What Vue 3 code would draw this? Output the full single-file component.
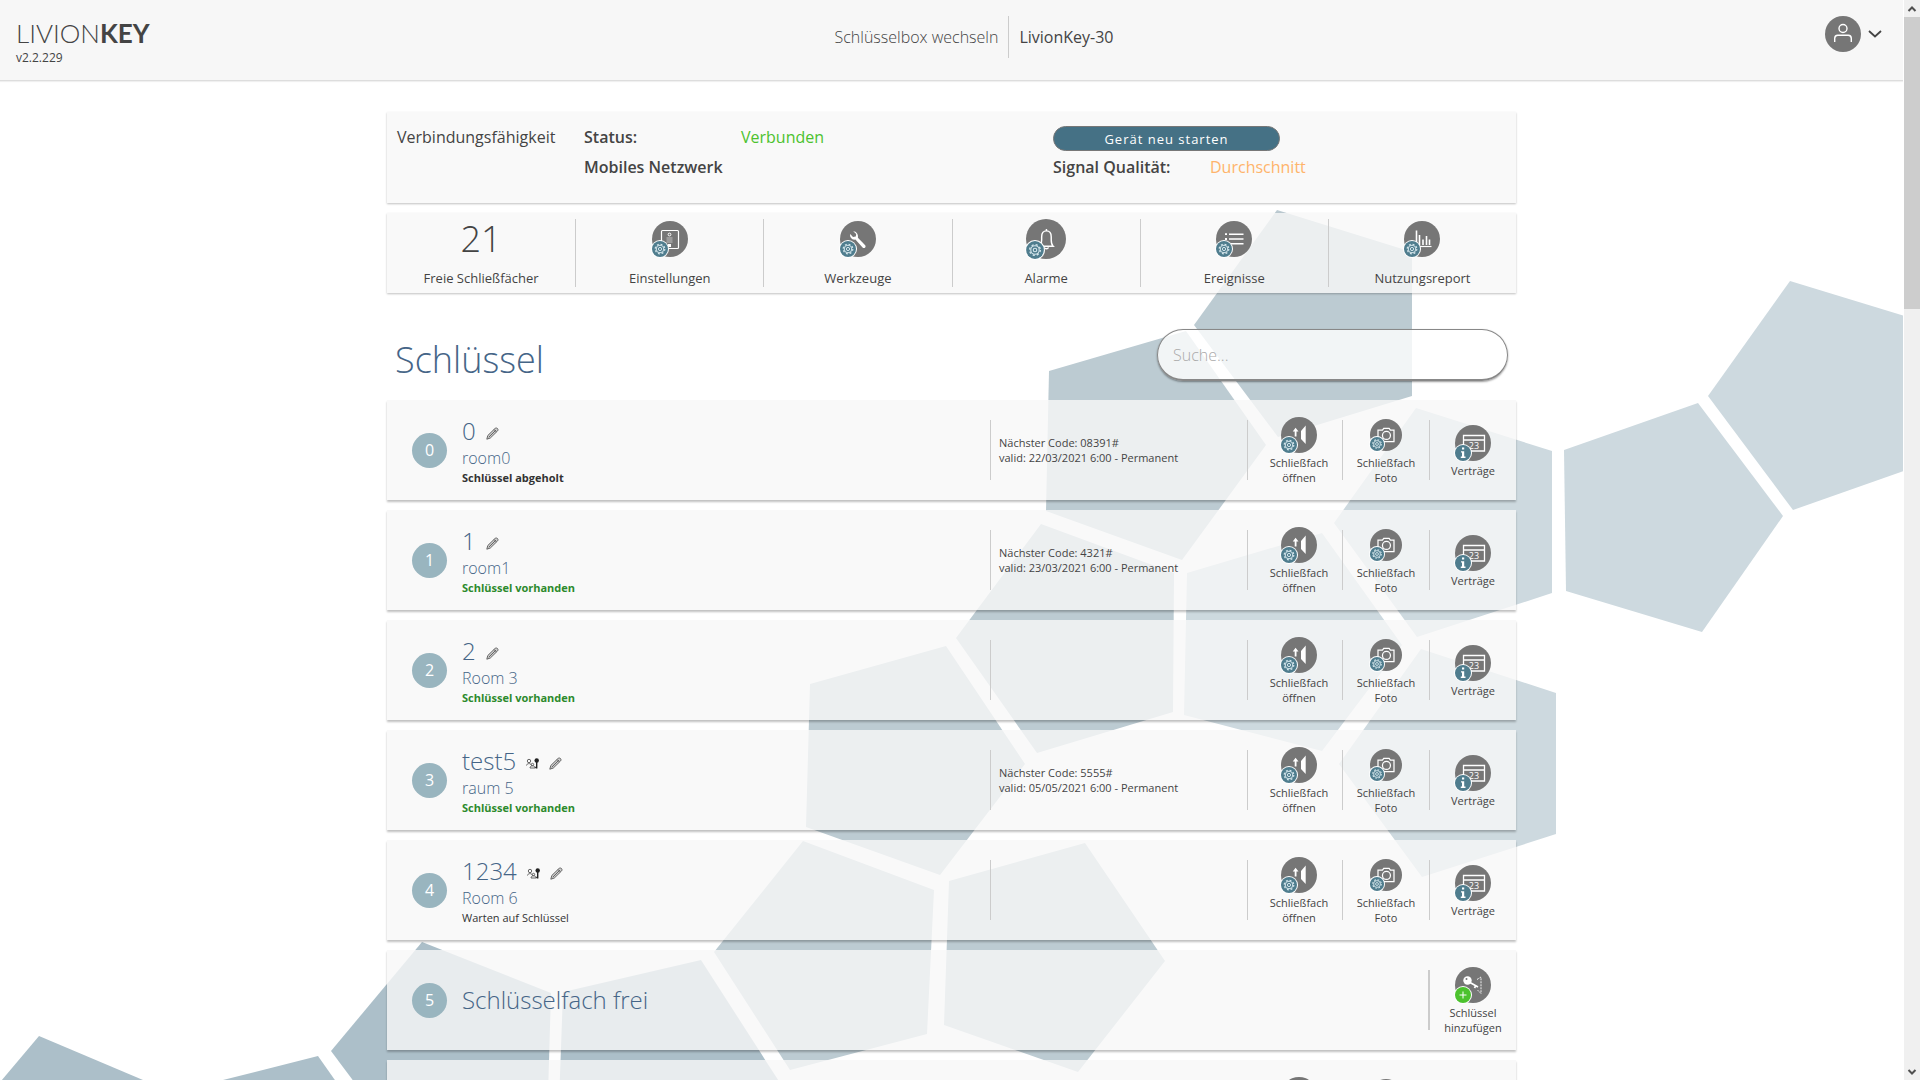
<script setup>
import { ref, computed } from 'vue'

const search = ref('')

const tiles = [
  { label: 'Einstellungen', icon: 'i-box', size: 36 },
  { label: 'Werkzeuge', icon: 'i-wrench', size: 36 },
  { label: 'Alarme', icon: 'i-bell', size: 40 },
  { label: 'Ereignisse', icon: 'i-list', size: 36 },
  { label: 'Nutzungsreport', icon: 'i-chart', size: 36 }
]

const keys = [
  { slot: 0, name: '0', room: 'room0', status: 'Schlüssel abgeholt', kind: 'away', code: '08391#', valid: '22/03/2021 6:00 - Permanent' },
  { slot: 1, name: '1', room: 'room1', status: 'Schlüssel vorhanden', kind: 'present', code: '4321#', valid: '23/03/2021 6:00 - Permanent' },
  { slot: 2, name: '2', room: 'Room 3', status: 'Schlüssel vorhanden', kind: 'present' },
  { slot: 3, name: 'test5', room: 'raum 5', status: 'Schlüssel vorhanden', kind: 'present', shared: true, code: '5555#', valid: '05/05/2021 6:00 - Permanent' },
  { slot: 4, name: '1234', room: 'Room 6', status: 'Warten auf Schlüssel', kind: 'waiting', shared: true },
  { slot: 5, free: true },
  { slot: 6, name: '6', room: 'Room 7', status: 'Schlüssel vorhanden', kind: 'present' }
]

const visibleKeys = computed(() => {
  const q = search.value.trim().toLowerCase()
  return q ? keys.filter(k => `${k.name ?? ''} ${k.room ?? ''}`.toLowerCase().includes(q)) : keys
})
</script>

<template>
  <div class="app">
    <svg class="defs" aria-hidden="true">
      <symbol id="i-gear" viewBox="0 0 18 18">
        <circle cx="9" cy="9" r="9" fill="#fff" />
        <circle cx="9" cy="9" r="8" fill="#4f7d8e" />
        <g fill="none" stroke="#d5e6ec">
          <circle cx="9" cy="9" r="1.6" stroke-width="1" />
          <circle cx="9" cy="9" r="3.8" stroke-width="1" />
          <circle cx="9" cy="9" r="4.8" stroke-width="1.2" stroke-dasharray="1.9 1.87" />
        </g>
      </symbol>
      <symbol id="i-info" viewBox="0 0 18 18">
        <circle cx="9" cy="9" r="9" fill="#fff" />
        <circle cx="9" cy="9" r="8" fill="#4f7d8e" />
        <path d="M8 3.6h2.2v2H8zM7 7.2h3.2v5.4h1.3v1.3H6.8v-1.3H8V8.500H7z" fill="#fff" />
      </symbol>
      <symbol id="i-plus" viewBox="0 0 18 18">
        <circle cx="9" cy="9" r="9" fill="#fff" />
        <circle cx="9" cy="9" r="8" fill="#4cc22e" />
        <path d="M9 5.500v7M5.500 9h7" stroke="#fff" stroke-width="1" />
      </symbol>
      <symbol id="i-box" viewBox="0 0 36 36">
        <g fill="none" stroke="#fff">
          <rect x="9.500" y="9.500" width="17" height="18" rx="1" stroke-width="1.2" />
          <circle cx="17.500" cy="13.500" r="1.400" stroke-width="1" />
          <path d="M14.500 17h6M14.500 19h6M14.500 21h6" stroke-width=".8" opacity=".7" />
        </g>
        <rect x="16" y="23" width="3" height="3" fill="#fff" />
      </symbol>
      <symbol id="i-wrench" viewBox="0 0 36 36">
        <path d="M13.200 10.200l3 2.800-.4 2.600-2.800.3-2.800-2.900c-.8 3 1.600 6.200 5.200 5.600l7.200 8c1.500 1.500 4-.7 2.600-2.400l-7.300-7.500c.7-3.400-1.700-6.600-4.700-6.500z" fill="#fff" />
      </symbol>
      <symbol id="i-bell" viewBox="0 0 36 36">
        <g fill="none" stroke="#fff" stroke-width="1.300">
          <path d="M12.500 24.500c1.300-1.300 1.600-2.800 1.600-5.500v-3c0-3.200 1.600-5.300 4.300-5.300s4.300 2.100 4.300 5.300v3c0 2.700.3 4.200 1.700 5.500z" />
          <path d="M18.400 9v1.700M16.500 25.500c.5 1.800 3.200 1.800 3.700 0" />
        </g>
      </symbol>
      <symbol id="i-list" viewBox="0 0 36 36">
        <path d="M13 13.200h14.500M13 18h14.500M13 22.800h14.500" stroke="#fff" stroke-width="1.400" />
        <path d="M9 13.200h2M9 18h2" stroke="#fff" stroke-width="1.800" />
      </symbol>
      <symbol id="i-chart" viewBox="0 0 36 36">
        <path d="M10.500 25.500h17" stroke="#fff" stroke-width="1.200" />
        <path d="M12.500 9.500V24M15.500 14V24M19 18.500V24M22.500 15V24M25.500 18.500V24" stroke="#fff" stroke-width="1.600" />
      </symbol>
      <symbol id="i-open" viewBox="0 0 36 36">
        <path d="M13.700 19.500v-5h-2l2.900-3.700 2.900 3.700h-2v5z" fill="#fff" />
        <path d="M20 14l4.700-5.500v18.500l-4.700-5z" fill="#fff" />
      </symbol>
      <symbol id="i-camera" viewBox="0 0 36 36">
        <g fill="none" stroke="#fff" stroke-width="1.400">
          <path d="M9 12.500h5l1.500-2h6l1.500 2h4v13H9z" />
          <circle cx="18.500" cy="18.500" r="4.500" />
        </g>
      </symbol>
      <symbol id="i-calendar" viewBox="0 0 36 36">
        <path d="M8.500 10.500h21v15.500h-21zM8.500 15h21" fill="none" stroke="#fff" stroke-width="1.300" />
        <text x="19" y="24" text-anchor="middle" font-size="9" font-family="Open Sans, sans-serif" fill="#fff">23</text>
      </symbol>
      <symbol id="i-key" viewBox="0 0 36 36">
        <circle cx="12.500" cy="13.500" r="4.200" fill="#fff" />
        <circle cx="11.500" cy="12" r="1" fill="#767676" />
        <path d="M15 15.500l8 4.500M20.500 19l-1 2" stroke="#fff" stroke-width="1.700" />
        <path d="M22 12.500l4-2.500v16.500l-4-4" fill="none" stroke="#fff" stroke-width=".9" stroke-dasharray="2 1" />
      </symbol>
    </svg>

    <div class="page">
      <svg class="backdrop" viewBox="0 0 1903 1080" preserveAspectRatio="xMidYMin slice" aria-hidden="true">
        <g fill="#bccbd2">
          <path d="M1277 210L1412 252V396L1278 437L1194 325Z" />
          <path d="M1049 371L1186 331L1266 445L1182 560L1046 511Z" />
          <path d="M1041 524L1174 573L1173 712L1037 753L956 638Z" />
          <path d="M810 684L946 646L1025 764L940 875L806 827Z" />
          <path d="M803 841L934 890L927 1034L790 1070L714 952Z" />
          <path d="M949 881L1085 843L1165 961L1078 1072L944 1025Z" />
        </g>
        <g fill="#cdd9df">
          <path d="M1187 573L1322 533L1402 645L1322 751L1184 715Z" />
          <path d="M1416 408L1552 451V593L1417 637L1334 523Z" />
          <path d="M1421 649L1556 693V834L1422 877L1339 764Z" />
          <path d="M1564 450L1698 403L1783 516L1702 632L1566 591Z" />
          <path d="M1790 281L1924 322V464L1793 510L1708 396Z" />
        </g>
        <g fill="#acbfc9">
          <path d="M422 942L551 993L547 1130H390L331 1051Z" />
          <path d="M563 992L701 960L782 1086L740 1130H558Z" />
          <path d="M39 1036L143 1080L190 1130H-20V1106Z" />
          <path d="M223 1080L318 1056L370 1130H160Z" />
        </g>
      </svg>

      <header class="topbar">
        <div class="brand">
          <a class="logo" href="#">LIVION<b>KEY</b></a>
          <span class="version">v2.2.229</span>
        </div>
        <div class="switcher">
          <a class="switch" href="#">Schlüsselbox wechseln</a>
          <span class="current">LivionKey-30</span>
        </div>
        <button class="user" type="button" aria-label="Benutzerkonto">
          <svg class="avatar" viewBox="0 0 36 36">
            <circle cx="18" cy="18" r="18" fill="#767676" />
            <g fill="none" stroke="#fff" stroke-width="1.400">
              <circle cx="18" cy="12.500" r="4" />
              <path d="M9.700 26v-3.500c0-2 1-3.200 3-3.200h10.600c2 0 3 1.200 3 3.200V26" />
            </g>
          </svg>
          <svg class="chevron" viewBox="0 0 14 8"><path d="M1 1l6 5.500L13 1" fill="none" stroke="#444" stroke-width="1.800" /></svg>
        </button>
      </header>

      <main class="content">
        <section class="panel connectivity">
          <h2 class="heading">Verbindungsfähigkeit</h2>
          <strong>Status:</strong>
          <span class="good">Verbunden</span>
          <button class="restart" type="button">Gerät neu starten</button>
          <strong class="network">Mobiles Netzwerk</strong>
          <strong class="signal">Signal Qualität:</strong>
          <span class="medium">Durchschnitt</span>
        </section>

        <nav class="panel tiles">
          <a class="tile" href="#">
            <span class="tile-icon count">21</span>
            <span>Freie Schließfächer</span>
          </a>
          <a v-for="t in tiles" :key="t.label" class="tile" href="#">
            <span class="tile-icon">
              <span class="disc" :class="{ large: t.size > 36 }">
                <svg class="glyph"><use :href="'#' + t.icon" /></svg>
                <svg class="badge"><use href="#i-gear" /></svg>
              </span>
            </span>
            <span>{{ t.label }}</span>
          </a>
        </nav>

        <div class="list-head">
          <h1>Schlüssel</h1>
          <input v-model="search" class="search" type="search" placeholder="Suche..." aria-label="Suche">
        </div>

        <ul class="keys">
          <li v-for="k in visibleKeys" :key="k.slot" class="key">
            <span class="slot">{{ k.slot }}</span>
            <template v-if="k.free">
              <div class="info"><span class="name">Schlüsselfach frei</span></div>
              <div class="cell last add">
                <button class="action" type="button">
                  <span class="disc">
                    <svg class="glyph"><use href="#i-key" /></svg>
                    <svg class="badge"><use href="#i-plus" /></svg>
                  </span>
                  <span>Schlüssel<br>hinzufügen</span>
                </button>
              </div>
            </template>
            <template v-else>
              <div class="info">
                <div class="title">
                  <span class="name">{{ k.name }}</span>
                  <svg v-if="k.shared" class="mini" viewBox="0 0 13 13">
                    <g fill="none" stroke="#555" stroke-width=".9">
                      <circle cx="3" cy="4" r="1.700" />
                      <path d="M.5 8.500c0-2 4-3 5 0M4 11c0-3 5-3 5 0z" />
                      <circle cx="6.500" cy="7.500" r="1.200" />
                    </g>
                    <path d="M10.700 5v6.500M10.700 10.500h-1.500" stroke="#222" stroke-width="1.400" />
                    <circle cx="10.700" cy="3.500" r="2.200" fill="#222" />
                  </svg>
                  <button class="edit" type="button" aria-label="Bearbeiten">
                    <svg class="mini" viewBox="0 0 13 13">
                      <path d="M.8 12.200l1-3.700 7.200-7c1.800-1.500 4 .7 2.500 2.500l-7.200 7z" fill="#ccc" stroke="#666" stroke-width="1" />
                      <path d="M2.800 10.200l7.200-7.200M8 2.500l2.500 2.500" fill="none" stroke="#666" stroke-width="1" />
                    </svg>
                  </button>
                </div>
                <span class="room">{{ k.room }}</span>
                <span class="status" :class="k.kind">{{ k.status }}</span>
              </div>
              <div class="cell code">
                <template v-if="k.code">
                  <span>Nächster Code: {{ k.code }}</span>
                  <span>valid: {{ k.valid }}</span>
                </template>
              </div>
              <div class="cell open">
                <button class="action" type="button">
                  <span class="disc">
                    <svg class="glyph"><use href="#i-open" /></svg>
                    <svg class="badge"><use href="#i-gear" /></svg>
                  </span>
                  <span>Schließfach<br>öffnen</span>
                </button>
              </div>
              <div class="cell photo">
                <button class="action" type="button">
                  <span class="disc small">
                    <svg class="glyph"><use href="#i-camera" /></svg>
                    <svg class="badge"><use href="#i-gear" /></svg>
                  </span>
                  <span>Schließfach<br>Foto</span>
                </button>
              </div>
              <div class="cell last">
                <button class="action" type="button">
                  <span class="disc">
                    <svg class="glyph"><use href="#i-calendar" /></svg>
                    <svg class="badge"><use href="#i-info" /></svg>
                  </span>
                  <span>Verträge</span>
                </button>
              </div>
            </template>
          </li>
        </ul>
      </main>
    </div>

    <div class="scrollbar" aria-hidden="true">
      <svg class="arrow" viewBox="0 0 16 17"><path d="M4.500 11L8 7.500L11.500 11" fill="none" stroke="#505050" stroke-width="2" /></svg>
      <div class="thumb"></div>
      <svg class="arrow" viewBox="0 0 16 17"><path d="M4.500 7L8 10.500L11.500 7" fill="none" stroke="#505050" stroke-width="2" /></svg>
    </div>
  </div>
</template>

<style>
body {
  background: #fff;
}
</style>

<style scoped>
* {
  box-sizing: border-box;
}

.app {
  display: flex;
  height: 100vh;
  overflow: hidden;
  font-family: "Open Sans", "Noto Sans", sans-serif;
  font-size: 16px;
  font-weight: 400;
  color: #444;
}

a {
  color: inherit;
  text-decoration: none;
}

button {
  padding: 0;
  border: 0;
  background: none;
  font: inherit;
  color: inherit;
  cursor: pointer;
}

svg {
  display: block;
}

.defs {
  display: none;
}

.page {
  position: relative;
  flex: 1;
  min-width: 0;
  overflow: hidden;
}

.backdrop {
  position: absolute;
  inset: 0;
  width: 100%;
  height: 100%;
}

.topbar {
  position: relative;
  display: grid;
  grid-template-columns: 1fr auto 1fr;
  height: 81px;
  padding: 0 21px 0 16px;
  background: #f7f7f7;
  border-bottom: 1px solid #ddd;
  box-shadow: 0 1px 1px rgba(0, 0, 0, .06);
}

.brand {
  display: flex;
  flex-direction: column;
  align-items: flex-start;
  padding-top: 18px;
}

.logo {
  font-family: Lato, sans-serif;
  font-size: 26px;
  font-weight: 300;
  line-height: 31px;
}

.logo b {
  font-weight: 700;
}

.version {
  font-size: 12px;
  line-height: 17px;
}

.switcher {
  display: flex;
  align-items: flex-start;
  padding: 16px 0 0 50px;
  line-height: 42px;
}

.switch {
  padding-right: 10px;
  border-right: 1px solid #ccc;
  font-weight: 300;
}

.current {
  padding-left: 10px;
}

.user {
  display: flex;
  justify-self: end;
  align-self: start;
  align-items: center;
  gap: 7px;
  margin-top: 16px;
}

.avatar {
  width: 36px;
  height: 36px;
}

.chevron {
  width: 14px;
  height: 8px;
}

.content {
  position: relative;
  max-width: 1129px;
  margin: 0 auto;
  padding-top: 31px;
}

.panel {
  margin-bottom: 10px;
  background: rgba(248, 248, 248, .8);
  box-shadow: 0 1px 2px rgba(0, 0, 0, .25);
}

.connectivity {
  display: grid;
  grid-template-columns: 187px 157px 312px 157px 1fr;
  grid-auto-rows: 30px;
  height: 91px;
  padding: 10px 9px 0 10px;
  line-height: 30px;
}

.heading {
  grid-row: span 2;
  margin: 0;
  font-size: 16px;
  font-weight: 400;
}

strong {
  font-weight: 600;
}

.good {
  color: #4cc22e;
}

.medium {
  color: #ffb46b;
}

.restart {
  grid-column: span 2;
  width: 227px;
  height: 25px;
  margin-top: 4px;
  border: 1px solid #777;
  border-radius: 13px;
  background: #457185;
  color: #fff;
  font-size: 13px;
  line-height: 22px;
  letter-spacing: 1px;
}

.network {
  grid-column: 2 / span 2;
}

.tiles {
  display: grid;
  grid-template-columns: repeat(6, 1fr);
  height: 80px;
  padding: 6px 0;
}

.tile {
  display: flex;
  flex-direction: column;
  align-items: center;
  font-size: 13px;
  line-height: 18px;
}

.tile + .tile {
  border-left: 1px solid #ccc;
}

.tile-icon {
  display: flex;
  align-items: center;
  height: 40px;
  margin-bottom: 10px;
}

.count {
  font-size: 36px;
  font-weight: 300;
}

.disc {
  position: relative;
  width: 36px;
  height: 36px;
  border-radius: 50%;
  background: #767676;
}

.disc.large {
  width: 40px;
  height: 40px;
}

.disc.small {
  width: 32px;
  height: 32px;
}

.glyph {
  width: 100%;
  height: 100%;
}

.badge {
  position: absolute;
  left: -1px;
  bottom: -1px;
  width: 50%;
  height: 50%;
}

.list-head {
  display: flex;
  justify-content: space-between;
  padding: 26px 8px 0;
  height: 97px;
}

h1 {
  margin: 6px 0 0;
  font-size: 36px;
  font-weight: 300;
  line-height: 50px;
  color: #456587;
}

.search {
  width: 351px;
  height: 52px;
  padding: 0 15px;
  border: 1px solid #888;
  border-bottom-width: 2px;
  border-radius: 26px;
  background: rgba(255, 255, 255, .8);
  box-shadow: 0 1px 2px rgba(0, 0, 0, .4);
  font: 300 16px "Open Sans", sans-serif;
  color: #444;
  appearance: none;
}

.search::placeholder {
  color: #aaa;
  opacity: 1;
}

.keys {
  display: flex;
  flex-direction: column;
  gap: 10px;
  margin: 0;
  padding: 0;
  list-style: none;
}

.key {
  display: flex;
  align-items: center;
  height: 100px;
  padding-left: 25px;
  background: rgba(248, 248, 248, .8);
  box-shadow: 0 2px 2px rgba(0, 0, 0, .25);
}

.slot {
  width: 35px;
  height: 35px;
  margin-right: 15px;
  border-radius: 50%;
  background: #99b5bf;
  color: #fff;
  line-height: 34px;
  text-align: center;
}

.info {
  display: flex;
  flex: 1;
  flex-direction: column;
  color: #456587;
}

.title {
  display: flex;
  align-items: center;
  gap: 10px;
}

.name {
  font-size: 24px;
  font-weight: 300;
  line-height: 32px;
}

.mini {
  width: 13px;
  height: 13px;
}

.edit,
.title > .mini {
  margin-top: 6px;
}

.room {
  font-weight: 300;
  line-height: 22px;
}

.status {
  font-size: 11px;
  font-weight: 700;
  line-height: 17px;
  color: #333;
}

.status.present {
  color: #2c8a2c;
}

.status.waiting {
  font-weight: 400;
}

.cell {
  display: flex;
  align-items: center;
  justify-content: center;
  height: 60px;
  border-left: 1px solid #ccc;
  font-size: 11px;
  line-height: 15px;
}

.code {
  width: 257px;
  flex-direction: column;
  align-items: flex-start;
  padding-left: 8px;
}

.open {
  width: 95px;
  padding-left: 8px;
}

.photo {
  width: 87px;
}

.last {
  width: 87px;
}

.add {
  width: 88px;
  border-left-width: 2px;
}

.action {
  display: flex;
  flex-direction: column;
  align-items: center;
  gap: 2px;
  padding-top: 2px;
}

.action .small {
  margin: 2px 0;
}

.scrollbar {
  display: flex;
  flex-direction: column;
  width: 17px;
  border-left: 1px solid #fff;
  background: #f0f0f0;
}

.arrow {
  width: 16px;
  height: 17px;
}

.arrow:last-child {
  margin-top: auto;
}

.thumb {
  height: 27%;
  background: #cdcdcd;
}
</style>
